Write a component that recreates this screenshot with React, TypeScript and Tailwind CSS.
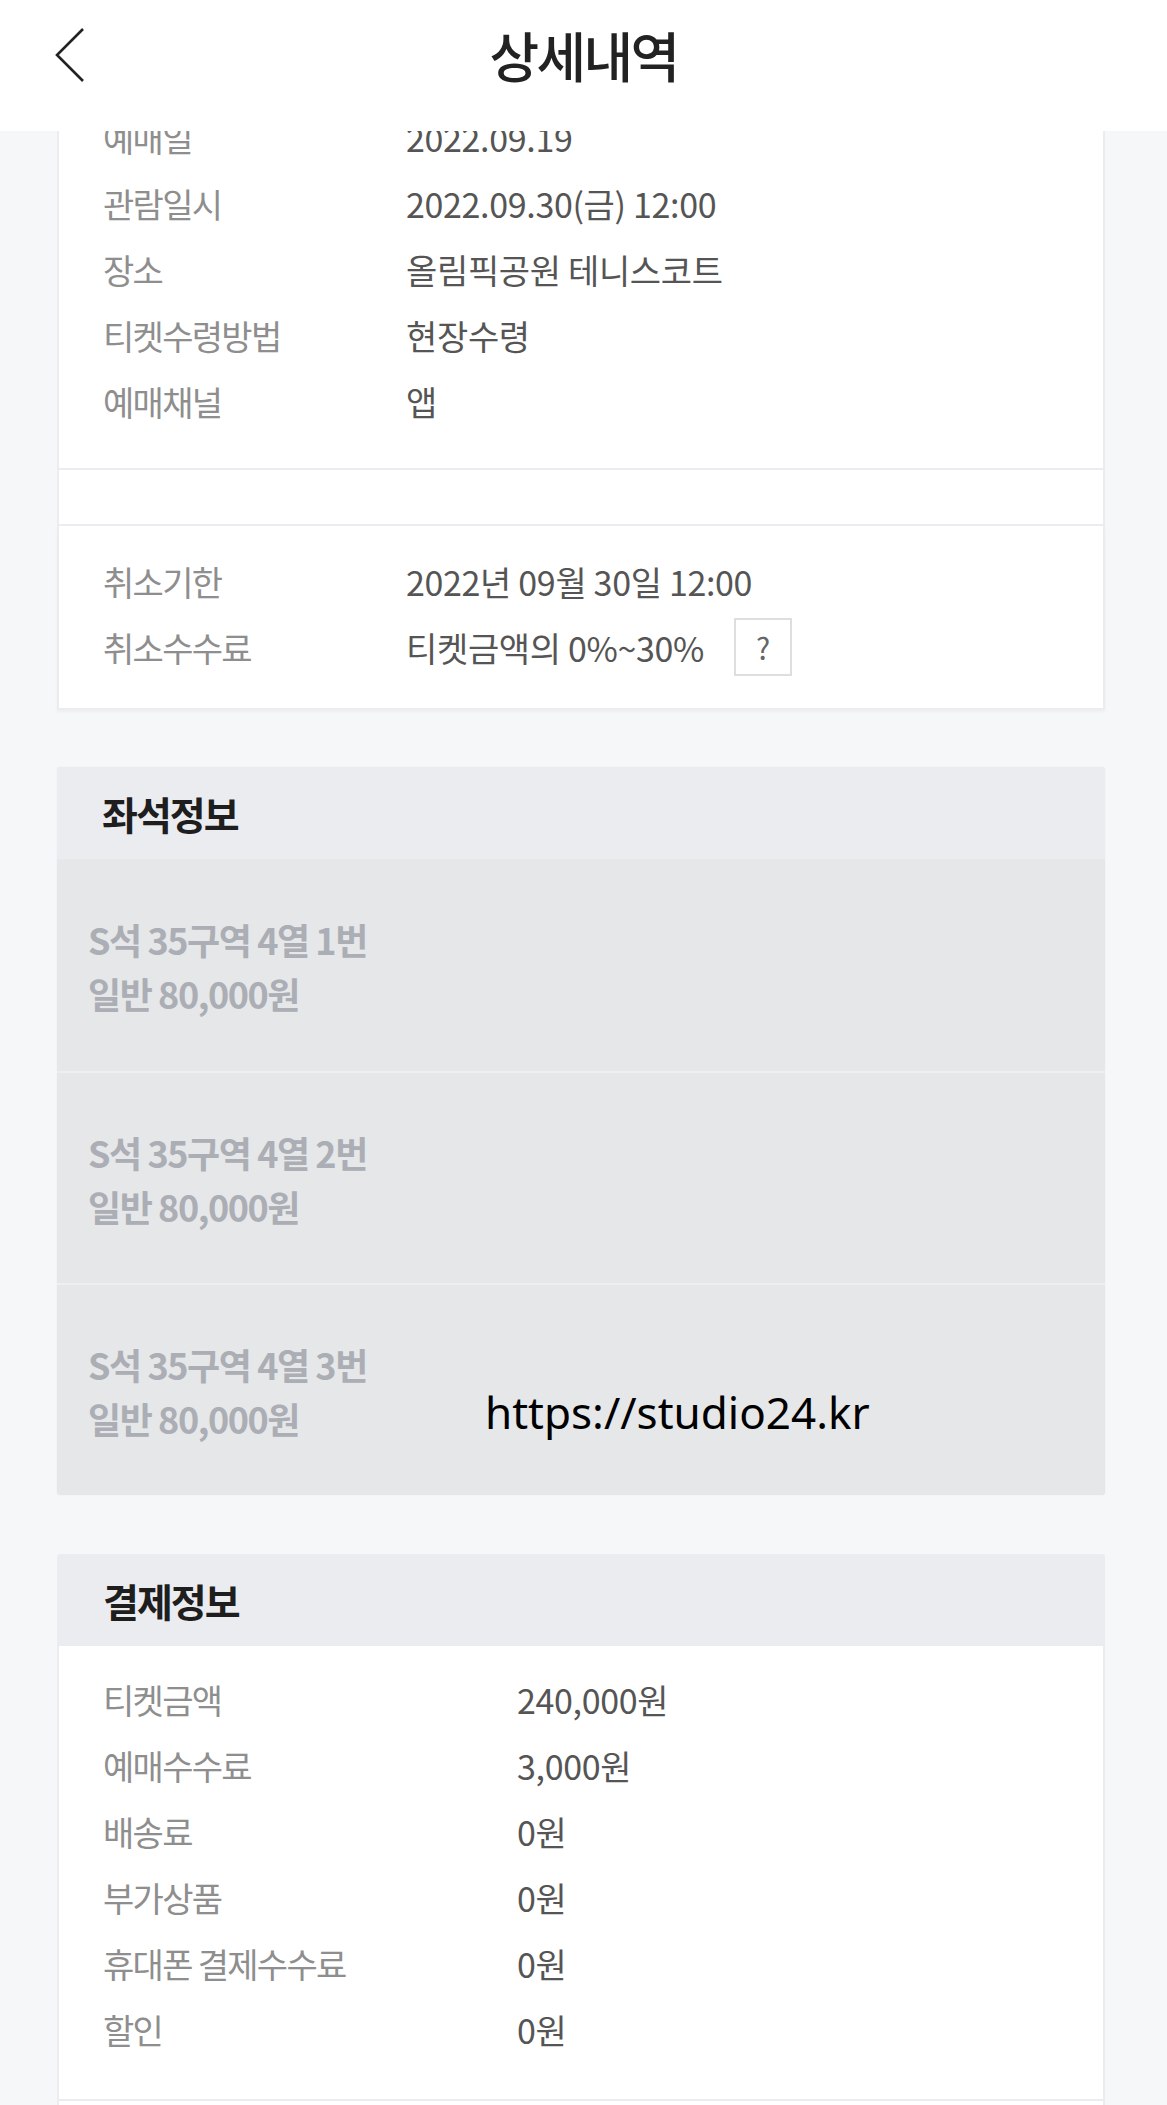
const font = "font-['Noto_Sans_CJK_KR',_'Noto_Sans',_sans-serif]";

type Row = { label: string; value: string };

const ticketRows: Row[] = [
  { label: "예매일", value: "2022.09.19" },
  { label: "관람일시", value: "2022.09.30(금) 12:00" },
  { label: "장소", value: "올림픽공원 테니스코트" },
  { label: "티켓수령방법", value: "현장수령" },
  { label: "예매채널", value: "앱" },
];

const payRows: Row[] = [
  { label: "티켓금액", value: "240,000원" },
  { label: "예매수수료", value: "3,000원" },
  { label: "배송료", value: "0원" },
  { label: "부가상품", value: "0원" },
  { label: "휴대폰 결제수수료", value: "0원" },
  { label: "할인", value: "0원" },
];

const seats = ["S석 35구역 4열 1번", "S석 35구역 4열 2번", "S석 35구역 4열 3번"];

const InfoRow = ({ label, value, labelWidth }: Row & { labelWidth: string }) => (
  <div className="flex h-[66px] items-center text-[34px]">
    <span className={`${labelWidth} shrink-0 tracking-[-0.05em] text-[#8e8e8e]`}>{label}</span>
    <span className="tracking-[-0.01em] text-[#555]">{value}</span>
  </div>
);

const App = () => {
  return (
    <div className={`${font} min-h-[2105px] w-[1167px] overflow-hidden bg-[#f6f7f9]`}>
      <header className="relative z-10 flex h-[131px] items-center justify-center bg-white">
        <svg
          className="absolute left-[50px] top-[24px]"
          width="40"
          height="64"
          viewBox="0 0 40 64"
          fill="none"
        >
          <polyline points="33,5 7,31 33,57" stroke="#222" strokeWidth="2.6" />
        </svg>
        <h1 className="-mt-[22px] text-[54px] font-medium tracking-[-0.05em] text-[#222]">상세내역</h1>
      </header>

      <main className="-mt-[27px] flex flex-col px-[57px]">
        <section className="w-[1048px] border-x-2 border-b-2 border-[#ebecef] bg-white px-[44px] pb-[34px]">
          {ticketRows.map((r) => (
            <InfoRow key={r.label} {...r} labelWidth="w-[303px]" />
          ))}
        </section>

        <div className="h-[56px] w-[1048px] border-x-2 border-b-2 border-[#ebecef] bg-white" />

        <section className="w-[1048px] border-x-2 border-b-2 border-[#ebecef] bg-white px-[44px] pb-[28px] pt-[22px] shadow-[0_2px_3px_rgba(0,0,0,0.04)]">
          <InfoRow label="취소기한" value="2022년 09월 30일 12:00" labelWidth="w-[303px]" />
          <div className="flex h-[66px] items-center text-[34px]">
            <span className="w-[303px] shrink-0 tracking-[-0.05em] text-[#8e8e8e]">취소수수료</span>
            <span className="tracking-[-0.01em] text-[#555]">티켓금액의 0%~30%</span>
            <span className="ml-[30px] flex h-[58px] w-[58px] items-center justify-center border-2 border-[#dedede] text-[30px] text-[#666]">
              ?
            </span>
          </div>
        </section>

        <section className="mt-[57px] w-[1048px] overflow-hidden rounded-[3px] bg-[#e6e7e9] shadow-[0_0_2px_rgba(0,0,0,0.05)]">
          <div className="flex h-[92px] items-center bg-[#ebecef] px-[45px]">
            <h2 className="text-[39px] font-bold tracking-[-0.05em] text-[#1e1e1e]">좌석정보</h2>
          </div>
          {seats.map((s, i) => (
            <div
              key={s}
              className={`relative flex h-[212px] flex-col justify-center px-[31px] pt-[2px] text-[36px] font-bold leading-[54px] tracking-[-0.04em] text-[#abaeb4] ${
                i > 0 ? "border-t-2 border-[#eeeff1]" : ""
              }`}
            >
              <span>{s}</span>
              <span>일반 80,000원</span>
              {i === 2 && (
                <span className="absolute left-[428px] top-[100px] font-['Noto_Sans',_sans-serif] text-[44px] font-normal tracking-normal text-black">
                  https://studio24.kr
                </span>
              )}
            </div>
          ))}
        </section>

        <section className="mt-[59px] w-[1048px] rounded-t-[3px] border-x-2 border-[#ebecef] bg-white">
          <div className="flex h-[92px] items-center bg-[#ebecef] px-[44px]">
            <h2 className="text-[39px] font-bold tracking-[-0.05em] text-[#1e1e1e]">결제정보</h2>
          </div>
          <div className="border-b-2 border-[#ebecef] px-[44px] pb-[37px] pt-[20px]">
            {payRows.map((r) => (
              <InfoRow key={r.label} {...r} labelWidth="w-[414px]" />
            ))}
          </div>
          <div className="h-[40px]" />
        </section>
      </main>
    </div>
  );
};

export default App;
